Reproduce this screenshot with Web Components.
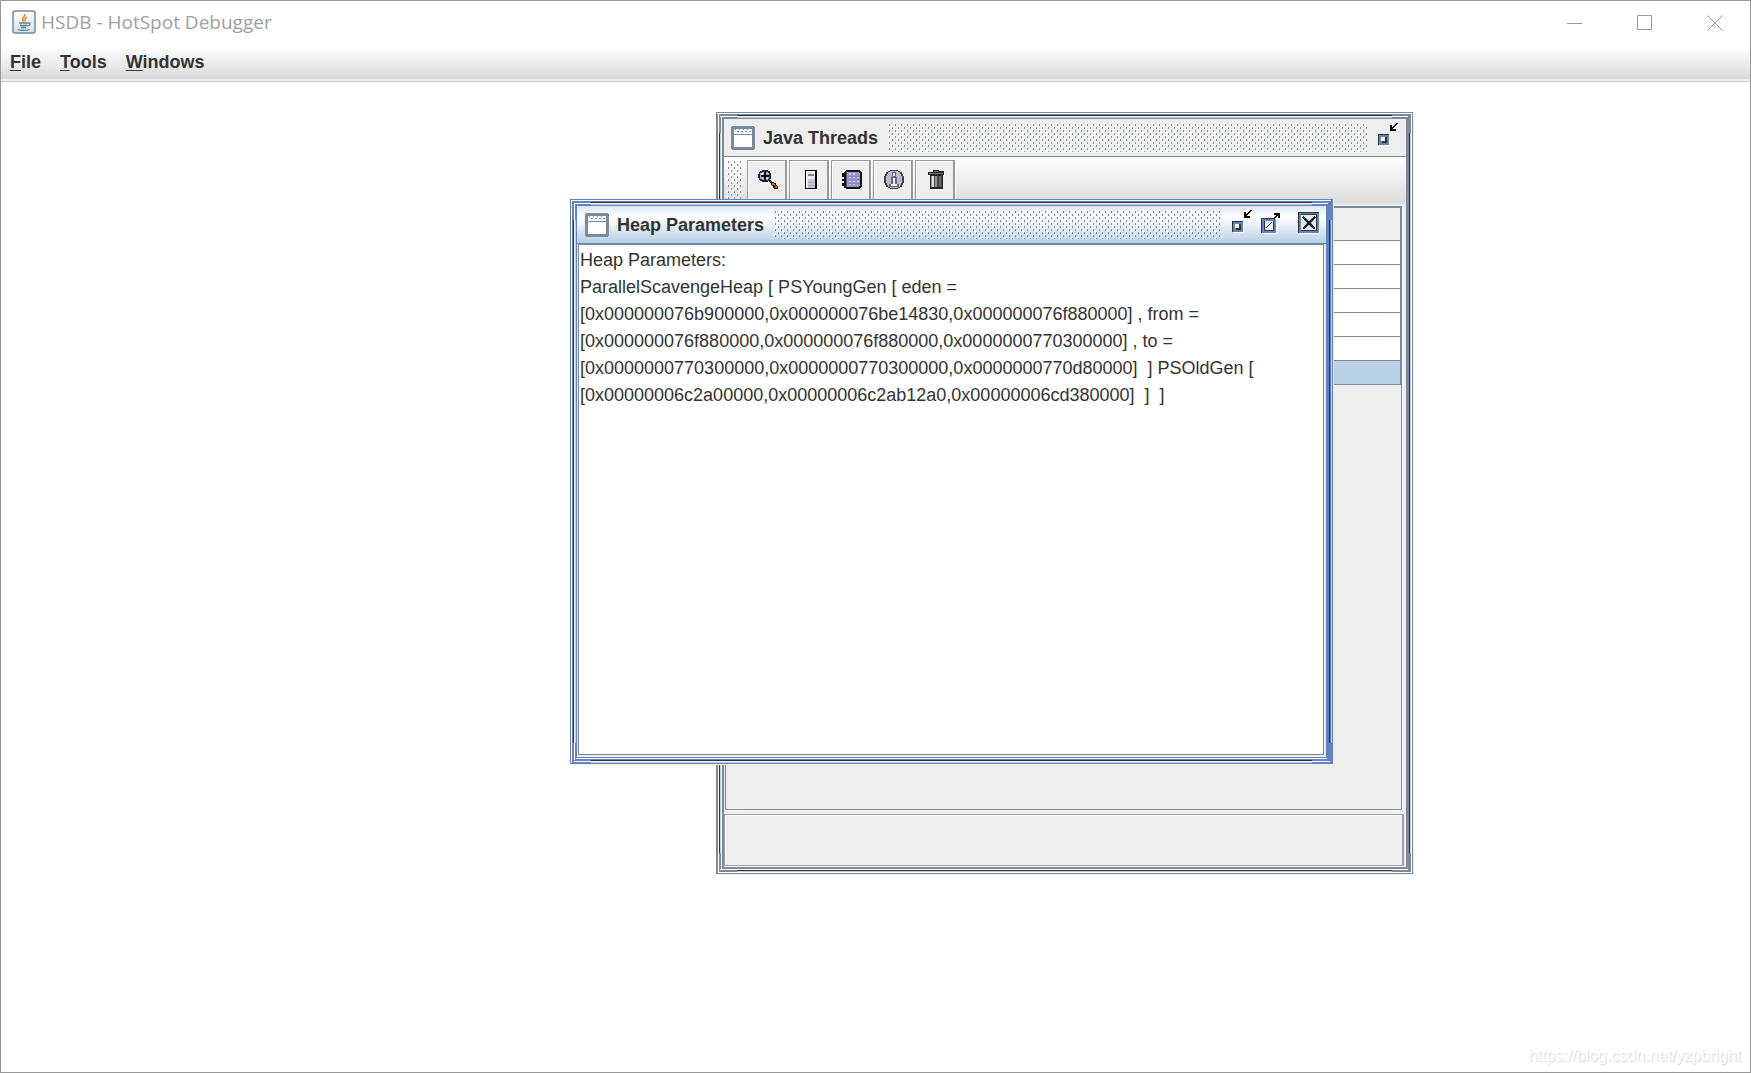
<!DOCTYPE html>
<html lang="en">
<head>
<meta charset="utf-8">
<title>HSDB - HotSpot Debugger</title>
<style>
html, body { margin: 0; height: 100%; }
body { font-family: "Liberation Sans", Arial, sans-serif; font-size: 18px; color: #333; background: #fff; overflow: hidden; }
</style>
</head>
<body>
<hsdb-app></hsdb-app>
<script>
const define = (name, html, setup) => {
  const template = document.createElement('template');
  template.innerHTML = html;
  customElements.define(name, class extends HTMLElement {
    constructor() {
      super();
      this.attachShadow({ mode: 'open' }).append(template.content.cloneNode(true));
    }
    connectedCallback() { if (setup) setup(this, this.shadowRoot); }
  });
};

/* Staggered dots used by title bars and the tool bar handle */
define('dot-grip', `
<style>
:host { display: block; color: var(--frame); }
svg { display: block; width: 100%; height: 100%; }
</style>
<svg shape-rendering="crispEdges" aria-hidden="true">
  <defs><pattern id="dots" width="6" height="6" patternUnits="userSpaceOnUse">
    <path fill="#fff" d="M0 0h2v1h-1v1h-1zM3 3h2v1h-1v1h-1z"/>
    <path fill="currentColor" d="M1 1h1v2h-1zM4 4h1v2h-1z"/>
  </pattern></defs>
  <rect width="100%" height="100%" fill="url(#dots)"/>
</svg>`);

define('app-title-bar', `
<style>
:host { display: flex; align-items: center; height: 45px; padding-left: 11px; box-sizing: border-box; background: #fff; }
.logo { width: 24px; height: 24px; margin: 0 5px 3px 0; }
h1 { flex: 1; margin: 0 0 4px; font: 400 19px/28px "Open Sans", sans-serif; color: #a0a0a0; }
button { width: 70px; height: 43px; margin-bottom: 2px; padding: 0; border: 0; background: none; display: grid; place-items: center; }
button svg { width: 16px; height: 16px; fill: none; stroke: #999; }
</style>
<svg class="logo" viewBox="0 0 24 24" aria-hidden="true">
  <defs><linearGradient id="g" x2="0" y2="1"><stop stop-color="#fff"/><stop offset="1" stop-color="#d9dfe3"/></linearGradient></defs>
  <rect x="1" y="1" width="22" height="22" rx="2" fill="url(#g)" stroke="#6d8ba3" stroke-width="1.5"/>
  <path d="M12.500 4c2 2-4 4-1 7.500M15 7c-3 1.500-1.500 3-2 4.500" fill="none" stroke="#ed8b2e" stroke-width="1.600"/>
  <path d="M7 13h9M8 15.500h7.500M9 17.500h5M5.500 19.500c3 1.200 9 1.200 12 0M16 13c3-.5 3 2-.5 3" fill="none" stroke="#53809f" stroke-width="1.300"/>
</svg>
<h1>HSDB - HotSpot Debugger</h1>
<button aria-label="Minimize"><svg viewBox="0 0 16 16"><path d="M0 8.500h15"/></svg></button>
<button aria-label="Maximize"><svg viewBox="0 0 16 16"><path d="M.5.500h14v14H.5z"/></svg></button>
<button aria-label="Close"><svg viewBox="0 0 16 16"><path d="M.5.500l15 15M15.500.500l-15 15"/></svg></button>
`);

define('app-menu-bar', `
<style>
:host { display: block; height: 36px; box-sizing: border-box; border-bottom: 1px solid #ccc; box-shadow: inset 0 -2px #eee; background: linear-gradient(#fff, #dadada 33px); }
nav { display: flex; gap: 19px; padding: 0 9px; }
button { padding: 0; border: 0; background: none; color: #333; font: 700 18px/32px "Liberation Sans", Arial, sans-serif; }
u { text-decoration-thickness: 1px; text-underline-offset: 2px; }
</style>
<nav aria-label="Main menu">
  <button><u>F</u>ile</button><button><u>T</u>ools</button><button><u>W</u>indows</button>
</nav>`);

/* Internal frame: bevelled border, title bar and body slot */
define('mdi-window', `
<style>
:host {
  --frame: #7a8a99; --dark: #333; --lite: #b8cfe5;
  --title: #eee;
  position: absolute; display: flex; flex-direction: column; box-sizing: border-box;
  padding: 7px; color: #333;
  background:
    linear-gradient(var(--dark) 1px, #eee 1px 2px, var(--lite) 2px) 50% 3px / calc(100% - 42px) 3px no-repeat,
    linear-gradient(var(--dark) 1px, #eee 1px 2px, var(--lite) 2px) 50% calc(100% - 1px) / calc(100% - 42px) 3px no-repeat,
    linear-gradient(to right, var(--dark) 1px, #eee 1px 2px, var(--lite) 2px) 3px 50% / 3px calc(100% - 42px) no-repeat,
    linear-gradient(to right, var(--dark) 1px, var(--frame) 1px 2px, var(--lite) 2px) calc(100% - 1px) 50% / 3px calc(100% - 42px) no-repeat,
    linear-gradient(#fff, #fff) 1px 1px / calc(100% - 3px) 1px no-repeat,
    linear-gradient(#fff, #fff) 4px 4px / calc(100% - 9px) 1px no-repeat,
    linear-gradient(#fff, #fff) 4px 4px / 1px calc(100% - 8px) no-repeat,
    linear-gradient(#fff, #fff) 4px calc(100% - 2px) / calc(100% - 7px) 1px no-repeat,
    linear-gradient(#fff, #fff) 6px calc(100% - 5px) / calc(100% - 12px) 1px no-repeat,
    linear-gradient(#fff, #fff) 1px 1px / 1px calc(100% - 2px) no-repeat,
    var(--frame);
  box-shadow: 1px 1px #eee;
}
:host([active]) { --frame: #6382bf; --title: linear-gradient(#dde8f3, #fff 30%, #b8cfe5); }
:host(:not([active])) {
  padding-left: 8px;
  background:
    linear-gradient(var(--dark) 1px, #eee 1px 2px, var(--lite) 2px) 50% 3px / calc(100% - 42px) 3px no-repeat,
    linear-gradient(#fff 1px, var(--dark) 1px 2px, var(--lite) 2px 3px, #fff 3px) 50% calc(100% - 1px) / calc(100% - 42px) 4px no-repeat,
    linear-gradient(to right, #fff 1px, var(--dark) 1px 2px, var(--lite) 2px 3px, #fff 3px) 2px 50% / 4px calc(100% - 42px) no-repeat,
    linear-gradient(to right, var(--dark) 1px, var(--lite) 1px 2px, #fff 2px) calc(100% - 1px) 50% / 3px calc(100% - 42px) no-repeat,
    linear-gradient(#fff, #fff) 1px 1px / calc(100% - 2px) 1px no-repeat,
    linear-gradient(#fff, #fff) 4px 4px / calc(100% - 9px) 1px no-repeat,
    linear-gradient(#fff, #fff) 5px 5px / 1px calc(100% - 10px) no-repeat,
    linear-gradient(#fff, #fff) 4px calc(100% - 4px) / calc(100% - 9px) 1px no-repeat,
    linear-gradient(#fff, #fff) 2px calc(100% - 1px) / calc(100% - 3px) 1px no-repeat,
    linear-gradient(#fff, #fff) 2px 2px / 1px calc(100% - 4px) no-repeat,
    linear-gradient(#fff, #fff) calc(100% - 1px) 1px / 1px calc(100% - 2px) no-repeat,
    var(--frame);
}
header { display: flex; align-items: center; height: 37px; padding: 0 6px 0 7px; background: var(--title); border-bottom: 1px solid var(--frame); }
:host([active]) header { padding-left: 8px; }
.doc { width: 24px; height: 24px; margin-right: 8px; flex: none; }
h2 { margin: 0 10px 0 0; font: 700 18px/24px "Liberation Sans", Arial, sans-serif; white-space: nowrap; }
dot-grip { flex: 1; height: 29px; margin-right: 10px; }
button { width: 22px; height: 26px; padding: 0; border: 0; background: none; }
button svg { display: block; width: 22px; height: 26px; overflow: visible; }
.controls { display: flex; margin-bottom: 5px; }
.max { width: 22px; margin-left: 7px; }
.close { margin-left: 15px; }
:host(:not([active])) .max, :host(:not([active])) .close { display: none; }
.body { flex: 1; display: flex; flex-direction: column; min-height: 0; background: #eee; }
</style>
<header>
  <svg class="doc" viewBox="0 0 24 24" shape-rendering="crispEdges" aria-hidden="true">
    <path fill="#7a8a99" d="M1 0h22v1h1v22h-1v1H1v-1H0V1h1z"/><path fill="#fff" d="M3 3h18v18H3z"/>
    <path fill="#7a8a99" d="M3 8h18v1H3z"/>
    <path fill="#6382bf" d="M4 3h1v1H4zM8 3h1v1H8zM12 3h1v1h-1zM16 3h1v1h-1zM6 5h2v1H6zM10 5h2v1h-2zM14 5h2v1h-2zM18 5h2v1h-2z"/>
  </svg>
  <h2></h2>
  <dot-grip></dot-grip>
  <div class="controls">
    <button class="min" aria-label="Minimize"><svg viewBox="0 0 22 26" shape-rendering="crispEdges">
      <path fill="#fff" d="M2 13h10v11H2zM14 2h7v7h-7z"/><path fill="#333" d="M0 12h11v1H1v10H0z"/><path fill="#6382bf" d="M1 13h10v10H1z"/>
      <path fill="#333" d="M4 15h5v6H4z"/><path fill="#fff" d="M3 15h4v4H3z"/>
      <path fill="#000" d="M12 3h2v2h1V4h1V3h1V2h1V1h2v1h-1v1h-1v1h-1v1h-1v1h-1v1h3v2h-6z"/>
    </svg></button>
    <button class="max" aria-label="Maximize"><svg viewBox="0 0 22 26" shape-rendering="crispEdges">
      <path fill="#fff" d="M2 10h15v15H2z"/><path fill="#333" d="M0 9h14v1H1v14H0z"/><path fill="#6382bf" d="M1 10h14v14H1z"/>
      <path fill="#333" d="M3 12h10v10H3z"/><path fill="#e4edf6" d="M4 12h8v9H4z"/>
      <path fill="#000" d="M4 19h1v-1h1v-1h1v-1h1v-1h1v-1h1v-1h1v1h-1v1h-1v1H8v1H7v1H6v1H4zM13 4h6v5h-2V7h-1v1h-1v1h-2V8h1V7h1V6h-2z"/>
    </svg></button>
    <button class="close" aria-label="Close"><svg viewBox="0 0 22 26" shape-rendering="crispEdges">
      <path fill="#fff" d="M1 4h21v21H1z"/><path fill="#333" d="M0 3h21v21H0z"/><path fill="#6382bf" d="M1 4h20v20H1z"/>
      <path fill="#333" d="M3 5h16v17H3z"/><path fill="#e4edf6" d="M3 6h15v15H3z"/>
      <path fill="none" stroke="#9fb5da" stroke-width="4" d="M7 10l8 8M15 10l-8 8"/>
      <path fill="none" stroke="#222" stroke-width="2" d="M5 8l12 12M17 8l-12 12"/>
    </svg></button>
  </div>
</header>
<div class="body"><slot></slot></div>`,
(host, root) => { root.querySelector('h2').textContent = host.getAttribute('heading'); });

define('thread-tool-bar', `
<style>
:host { display: flex; align-items: flex-start; gap: 2px; height: 49px; box-sizing: border-box; padding: 3px 0 0 3px; background: linear-gradient(#fff, #dadada); box-shadow: inset 0 -2px #eee; }
dot-grip { width: 16px; height: 41px; margin-right: 2px; }
button { width: 40px; height: 41px; box-sizing: border-box; padding: 0 0 0 2px; border: 1px solid #999; border-right-width: 2px; border-bottom-width: 2px; background: #eee; box-shadow: inset 1px 1px #fff, 1px 1px #fff; display: grid; place-items: center; }
svg { display: block; width: 20px; height: 20px; }
</style>
<dot-grip></dot-grip>
<button aria-label="Inspect thread"><svg viewBox="0 0 20 20" shape-rendering="crispEdges">
  <path fill="#fff" d="M12 15h2v2h2v2h3v1h-4v-2h-2zM3 13h7v1H3z"/>
  <path fill="#223" d="M4 0h6v1h2v2h1v6h-1v1h-1v1h-1v1H4v-1H2v-1H1V8H0V4h1V2h1V1h2z"/>
  <path fill="#aab0d4" d="M4 2h6v1h1v6h-1v1H4V9H2V3h2z"/><path fill="#e4e6f4" d="M3 3h2v2H3zM8 7h2v2H8z"/>
  <path fill="#000" d="M6 2h2v3h3v2H8v3H6V7H3V5h3z"/>
  <path fill="#222a66" d="M11 10h2v1h1v2h-2v-1h-1z"/>
  <path fill="#2a180c" d="M13 12h3v1h2v2h1v1h1v3h-4v-1h-1v-2h-1v-1h-1z"/><path fill="#b8702c" d="M14 13h2v1h1v2h2v2h-2v-2h-1v-1h-2z"/>
</svg></button>
<button aria-label="Show stack memory"><svg viewBox="1 0 20 20" shape-rendering="crispEdges">
  <path fill="#fff" d="M7 1h12v19H7z"/><path fill="#000" d="M6 0h12v19H6z"/><path fill="#e8e6ee" d="M7 1h9v17H7z"/><path fill="#fff" d="M7 1h1v17H7zM8 1h8v1H8z"/>
  <path fill="#c9c3d4" d="M9 9h7v9H9z"/><path fill="#888" d="M9 4h6v2H9z"/><path fill="#b0a8bd" d="M9 12h6v1H9zM9 15h6v1H9z"/>
</svg></button>
<button aria-label="Show Java stack trace"><svg viewBox="0 0 20 20" shape-rendering="crispEdges">
  <path fill="#fff" d="M4 18h15v2H4z"/><path fill="#111" d="M4 0h14v1h1v1h1v15h-1v1h-1v1H4v-1H2v-2H0v-3h2v-2H0V9h2V7H0V3h2V2h1V1h1z"/>
  <path fill="#9997cc" d="M4 2h13v1h1v13h-1v1H4z"/><path fill="#5a5888" d="M4 2h1v15H4z"/>
  <path fill="#c6c6e8" d="M7 3h2v2H7zM11 3h2v2h-2zM7 7h2v1H7zM11 7h2v1h-2zM15 7h2v1h-2zM7 11h2v1H7zM11 11h2v1h-2zM15 11h2v1h-2zM7 14h2v1H7zM11 14h2v1h-2z"/>
  <path fill="#8886bc" d="M6 6h11v1H6zM6 9h11v1H6zM6 13h11v1H6z"/>
</svg></button>
<button aria-label="Show thread information"><svg viewBox="0 0 20 20" shape-rendering="crispEdges">
  <path fill="#444" d="M6 0h8v1h2v1h2v2h1v2h1v7h-1v2h-1v2h-2v1h-2v1H6v-1H4v-1H2v-2H1v-2H0V6h1V4h1V2h2V1h2z"/>
  <path fill="#bbb9d0" d="M6 1h8v1h2v2h1v2h1v7h-1v2h-1v2h-2v1H6v-1H4v-2H3v-2H2V6h1V4h1V2h2z"/>
  <path fill="#667" d="M8 2h4v5h1v7h2v3H5v-3h2V7h1z"/><path fill="#eee" d="M9 3h2v3H9zM9 8h2v6h2v2H7v-2h2z"/>
</svg></button>
<button aria-label="Find crashes"><svg viewBox="0 0 20 20" shape-rendering="crispEdges">
  <path fill="#fff" d="M4 3h15v3h-2v14H5z"/><path fill="#222" d="M7 0h6v1h5v4h-1v14H4V5H2V2h5z"/>
  <path fill="#777" d="M8 1h4v1H8zM3 3h14v1H3z"/><path fill="#999" d="M5 6h11v11H5z"/><path fill="#ddd" d="M6 6h2v11H6z"/>
  <path fill="#444" d="M8 6h1v11H8zM11 6h2v11h-2zM15 6h1v11h-1z"/><path fill="#666" d="M13 6h2v11h-2z"/>
</svg></button>`);

define('thread-table', `
<style>
:host { flex: 1; display: block; margin: 0 4px 2px 1px; border: 1px solid #7a8a99; border-top-width: 2px; box-shadow: 1px 1px #fff; background: #eee; }
table { width: 100%; border-collapse: collapse; border-right: 1px solid #7a8a99; }
th, td { padding: 0; box-sizing: border-box; border-bottom: 1px solid #7a8a99; }
th { height: 32px; background: #eee; }
td { height: 24px; background: #fff; }
.selected td { background: #b8cfe5; }
</style>
<table aria-label="Threads">
  <thead><tr><th></th></tr></thead>
  <tbody><tr><td></td></tr><tr><td></td></tr><tr><td></td></tr><tr><td></td></tr><tr><td></td></tr><tr class="selected"><td></td></tr></tbody>
</table>`);

define('status-panel', `
<style>
:host { display: block; height: 52px; box-sizing: border-box; margin: 2px 2px 1px 0; border: 1px solid #a0a0a0; border-right-width: 2px; box-shadow: inset 1px 1px #fff, 0 1px #fff; background: #eee; }
</style>`);

define('text-pane', `
<style>
:host { flex: 1; display: flex; padding: 0 2px 2px 1px; background: #eee; }
textarea { flex: 1; box-sizing: border-box; margin: 0; padding: 2px 1px; border: 1px solid #7a8a99; outline: 0; resize: none; overflow: hidden; white-space: pre; background: #fff; color: #333; font: 400 18px/27px "Liberation Sans", Arial, sans-serif; }
</style>
<textarea readonly aria-label="Heap Parameters">Heap Parameters:
ParallelScavengeHeap [ PSYoungGen [ eden =
[0x000000076b900000,0x000000076be14830,0x000000076f880000] , from =
[0x000000076f880000,0x000000076f880000,0x0000000770300000] , to =
[0x0000000770300000,0x0000000770300000,0x0000000770d80000]  ] PSOldGen [
[0x00000006c2a00000,0x00000006c2ab12a0,0x00000006cd380000]  ]  ]</textarea>`);

define('hsdb-app', `
<style>
:host { display: flex; flex-direction: column; height: 100vh; box-sizing: border-box; border: 1px solid #999; background: #fff; }
main { position: relative; flex: 1; min-height: 0; overflow: hidden; }
.threads { left: 715px; top: 30px; width: 697px; height: 762px; }
.heap { left: 569px; top: 117px; width: 763px; height: 565px; }
.mark { position: absolute; right: 9px; bottom: 5px; font-size: 16px; line-height: 22px; color: #fff; text-shadow: 1px 1px 1px #d4d4d4; }
</style>
<app-title-bar></app-title-bar>
<app-menu-bar></app-menu-bar>
<main>
  <mdi-window class="threads" heading="Java Threads">
    <thread-tool-bar></thread-tool-bar>
    <thread-table></thread-table>
    <status-panel></status-panel>
  </mdi-window>
  <mdi-window class="heap" heading="Heap Parameters" active>
    <text-pane></text-pane>
  </mdi-window>
  <span class="mark">https://blog.csdn.net/yzpbright</span>
</main>`);
</script>
</body>
</html>
